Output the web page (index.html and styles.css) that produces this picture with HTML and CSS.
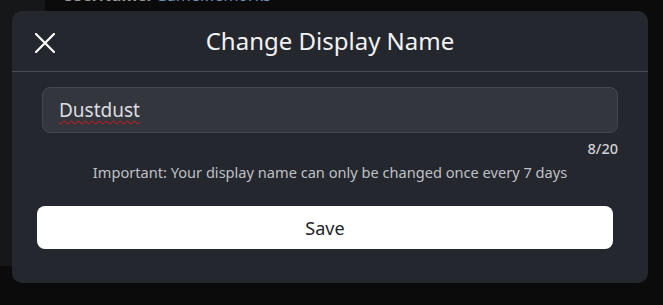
FILE: index.html
```html
<!DOCTYPE html>
<html lang="en">
<head>
<meta charset="utf-8">
<title>Change Display Name</title>
<link rel="stylesheet" href="styles.css">
</head>
<body>
<div class="page">
  <aside class="side"></aside>
  <main class="content">
    <p class="bg-line"><b>UserName:</b> <span class="bg-name">GameMemorks</span></p>
  </main>
</div>

<div class="modal" role="dialog" aria-labelledby="modal-title">
  <header class="modal-head">
    <button class="close" aria-label="Close">
      <svg width="20" height="20" viewBox="0 0 20 20" aria-hidden="true">
        <path d="M1 1 L19 19 M19 1 L1 19" stroke="#ffffff" stroke-width="2.2" stroke-linecap="square" fill="none"/>
      </svg>
    </button>
    <h2 id="modal-title" class="title">Change Display Name</h2>
  </header>
  <div class="modal-body">
    <div class="field"><span class="field-text">Dustdust</span></div>
    <div class="counter">8/20</div>
    <p class="note">Important: Your display name can only be changed once every 7 days</p>
    <button class="save">Save</button>
  </div>
</div>
</body>
</html>
```

FILE: styles.css
```css
* { box-sizing: border-box; }
html, body {
  margin: 0;
  padding: 0;
  width: 663px;
  height: 305px;
  overflow: hidden;
  background: #0b0b0b;
  font-family: "Noto Sans", "Open Sans", sans-serif;
}
.page {
  display: flex;
  height: 305px;
}
.side {
  width: 45px;
  height: 266px;
  background: #161719;
}
.content {
  flex: 1;
  padding-left: 17px;
}
.bg-line {
  margin: -14px 0 0;
  font-size: 16px;
  line-height: 18px;
  color: #9a9b9e;
}
.bg-name { color: #6f93bb; }

.modal {
  position: absolute;
  left: 12px;
  top: 11px;
  width: 636px;
  height: 272px;
  background: #25272e;
  border-radius: 10px;
  display: flex;
  flex-direction: column;
}
.modal-head {
  height: 61px;
  border-bottom: 1px solid #4b4d54;
  display: flex;
  align-items: center;
  justify-content: center;
  position: relative;
}
.close {
  position: absolute;
  left: 23px;
  top: 22px;
  width: 20px;
  height: 20px;
  padding: 0;
  border: 0;
  background: none;
  display: flex;
}
.title {
  margin: 0;
  font-size: 24px;
  font-weight: 400;
  color: #f2f2f3;
  line-height: 32px;
}
.modal-body {
  display: flex;
  flex-direction: column;
  padding: 15px 30px 0;
}
.field {
  height: 46px;
  border: 1px solid #45474e;
  background: #34363e;
  border-radius: 8px;
  display: flex;
  align-items: center;
  padding-left: 16px;
}
.field-text {
  font-size: 19px;
  color: #dcdde0;
  text-decoration: underline wavy #e0161c;
  text-decoration-thickness: 1px;
  text-underline-offset: 3px;
}
.counter {
  margin-top: 5px;
  text-align: right;
  font-size: 14.5px;
  line-height: 20px;
  font-weight: 500;
  color: #cfd0d3;
}
.note {
  margin: 4px 0 0;
  text-align: center;
  font-size: 14.6px;
  line-height: 20px;
  color: #bfc0c4;
}
.save {
  margin: 24px 5px 0 -5px;
  height: 43px;
  border: 0;
  border-radius: 8px;
  background: #ffffff;
  color: #222327;
  font-family: inherit;
  font-size: 18px;
  line-height: 24px;
}
```
